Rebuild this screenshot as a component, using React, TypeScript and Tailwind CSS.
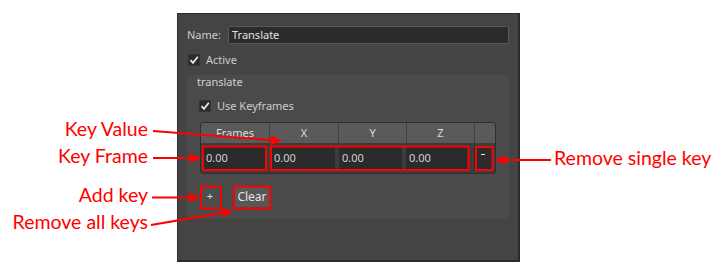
import React from "react";

const Check = () => (
  <div className="w-[12px] h-[12px] bg-[#2b2b2b] border border-[#353535] flex items-center justify-center shrink-0">
    <svg width="10" height="10" viewBox="0 0 10 10">
      <path d="M1.5 5.2 L4 7.8 L8.8 1.8" fill="none" stroke="#e8e8e8" strokeWidth="1.8" />
    </svg>
  </div>
);

const Arrow = ({ x1, y1, x2, y2 }: { x1: number; y1: number; x2: number; y2: number }) => {
  const dx = x2 - x1;
  const dy = y2 - y1;
  const len = Math.sqrt(dx * dx + dy * dy);
  const ux = dx / len;
  const uy = dy / len;
  const hl = 11;
  const hw = 5;
  const bx = x2 - ux * hl;
  const by = y2 - uy * hl;
  const p1 = `${x2},${y2}`;
  const p2 = `${bx - uy * hw},${by + ux * hw}`;
  const p3 = `${bx + uy * hw},${by - ux * hw}`;
  return (
    <g>
      <line x1={x1} y1={y1} x2={bx} y2={by} stroke="#ff0000" strokeWidth="2.2" />
      <polygon points={`${p1} ${p2} ${p3}`} fill="#ff0000" />
    </g>
  );
};

export default function App() {
  const ui = { fontFamily: '"Noto Sans", "DejaVu Sans", sans-serif' };
  const ann = { fontFamily: 'Lato, "Noto Sans", sans-serif' };
  return (
    <div className="relative w-[728px] h-[275px] bg-white overflow-hidden">
      <div className="pt-[13px] pl-[177px]" style={ui}>
        <div className="w-[343px] h-[249px] bg-[#444444] border-l border-t border-l-[#2e2e2e] border-t-[#2e2e2e] border-r-2 border-b-2 border-r-[#2a2a2a] border-b-[#2a2a2a] text-[11px] text-[#cccccc]">
          <div className="pt-[12px] pl-[9px] flex items-center">
            <div className="w-[41px] leading-[18px]">Name:</div>
            <div className="w-[281px] h-[18px] bg-[#2b2b2b] border border-[#585858] rounded-[2px] pl-[3px] flex items-center text-[#e2e2e2]">
              Translate
            </div>
          </div>
          <div className="mt-[10px] ml-[10px] flex items-center gap-[6px] h-[12px]">
            <Check />
            <span className="leading-[12px]">Active</span>
          </div>
          <div className="mt-[9px] ml-[9px] w-[322px] h-[144px] bg-[#4a4a4a]">
            <div className="pl-[10px] h-[14px] leading-[14px] text-[#d0d0d0]">translate</div>
            <div className="mt-[11px] ml-[12px] flex items-center gap-[6px] h-[12px]">
              <Check />
              <span className="leading-[12px]">Use Keyframes</span>
            </div>
            <div className="mt-[10px] ml-[13px] w-[296px] h-[52px] bg-[#3c3c3c] border border-[#2f2f2f] rounded-[3px] overflow-hidden">
              <div className="grid grid-cols-[68px_68px_67px_67px_1fr] gap-x-px bg-[#404040] h-[20px]">
                <div className="bg-[#5a5a5a] flex items-center justify-center text-[#dddddd]">Frames</div>
                <div className="bg-[#5a5a5a] flex items-center justify-center text-[#dddddd]">X</div>
                <div className="bg-[#5a5a5a] flex items-center justify-center text-[#dddddd]">Y</div>
                <div className="bg-[#5a5a5a] flex items-center justify-center text-[#dddddd]">Z</div>
                <div className="bg-[#5a5a5a]" />
              </div>
              <div className="grid grid-cols-[68px_68px_67px_67px_1fr] h-[30px] pt-[3px] pb-[3px]">
                {["0.00", "0.00", "0.00", "0.00"].map((v, i) => (
                  <div key={i} className="px-[2px] h-full">
                    <div className="h-full bg-[#2b2b2b] flex items-center pl-[3px] text-[#cfcfcf]">{v}</div>
                  </div>
                ))}
                <div className="px-[3px] h-full">
                  <div className="h-full bg-[#2b2b2b] flex justify-center pt-[8px]">
                    <div className="w-[4px] h-[1px] bg-[#e8e8e8]" />
                  </div>
                </div>
              </div>
            </div>
            <div className="mt-[12px] ml-[14px] flex items-center gap-[16px] h-[21px]">
              <div className="w-[18px] h-[21px] bg-[#4d4d4d] flex items-center justify-center text-[#dddddd]">+</div>
              <div className="w-[34px] h-[21px] bg-[#575757] flex items-center justify-center text-[#e4e4e4] text-[12px]">Clear</div>
            </div>
          </div>
        </div>
      </div>

      <div className="absolute right-[580px] top-[119px] text-right text-[19.5px] leading-[20px] text-[#ff0000] whitespace-nowrap" style={ann}>Key Value</div>
      <div className="absolute right-[580px] top-[146px] text-right text-[19.5px] leading-[20px] text-[#ff0000] whitespace-nowrap" style={ann}>Key Frame</div>
      <div className="absolute right-[580px] top-[185px] text-right text-[19.5px] leading-[20px] text-[#ff0000] whitespace-nowrap" style={ann}>Add key</div>
      <div className="absolute right-[580px] top-[212px] text-right text-[19.5px] leading-[20px] text-[#ff0000] whitespace-nowrap" style={ann}>Remove all keys</div>
      <div className="absolute left-[554px] top-[148px] text-[19.5px] leading-[20px] text-[#ff0000] whitespace-nowrap" style={ann}>Remove single key</div>

      <svg className="absolute left-0 top-0 pointer-events-none" width="728" height="275" viewBox="0 0 728 275">
        <rect x="203" y="146.5" width="63" height="23.5" fill="none" stroke="#ff0000" strokeWidth="2" />
        <rect x="271" y="146.5" width="197.5" height="23.5" fill="none" stroke="#ff0000" strokeWidth="2" />
        <rect x="476" y="147" width="16.5" height="23" fill="none" stroke="#ff0000" strokeWidth="2" />
        <rect x="201" y="186.5" width="20" height="22" fill="none" stroke="#ff0000" strokeWidth="2" />
        <rect x="234" y="186.5" width="36" height="22" fill="none" stroke="#ff0000" strokeWidth="2" />
        <Arrow x1={153} y1={131} x2={282} y2={141} />
        <Arrow x1={153} y1={158} x2={201} y2={158} />
        <Arrow x1={152} y1={197.5} x2={200} y2={197.5} />
        <Arrow x1={151} y1={225} x2={233} y2={211} />
        <Arrow x1={551} y1={160} x2={495} y2={160} />
      </svg>
    </div>
  );
}
